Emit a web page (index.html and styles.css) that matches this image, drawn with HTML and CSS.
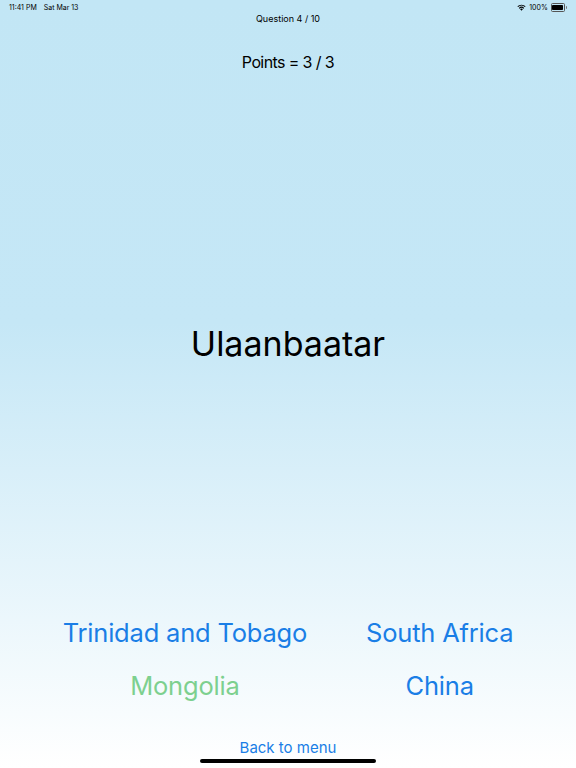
FILE: index.html
```html
<!DOCTYPE html>
<html lang="en">
<head>
<meta charset="utf-8">
<title>Quiz</title>
<link rel="stylesheet" href="styles.css">
</head>
<body>
<div class="screen">
  <div class="status">
    <div class="status-left"><span>11:41 PM</span><span>Sat Mar 13</span></div>
    <div class="status-right">
      <svg class="wifi" width="9" height="7" viewBox="0 0 18 13"><path d="M9 13 L6 9.6 A4.6 4.6 0 0 1 12 9.6 Z" fill="#000"/><path d="M3.6 7.3 A7.8 7.8 0 0 1 14.4 7.3 L13 8.8 A5.8 5.8 0 0 0 5 8.8 Z" fill="#000"/><path d="M0.8 4.2 A12 12 0 0 1 17.2 4.2 L15.8 5.7 A10 10 0 0 0 2.2 5.7 Z" fill="#000"/></svg>
      <span>100%</span>
      <span class="battery"><span class="battery-fill"></span></span><span class="battery-tip"></span>
    </div>
  </div>
  <div class="question">Question 4 / 10</div>
  <div class="points">Points = 3 / 3</div>
  <div class="capital">Ulaanbaatar</div>
  <div class="answers">
    <div class="col">
      <div class="answer">Trinidad and Tobago</div>
      <div class="answer correct">Mongolia</div>
    </div>
    <div class="col">
      <div class="answer">South Africa</div>
      <div class="answer">China</div>
    </div>
  </div>
  <div class="back">Back to menu</div>
  <div class="home"></div>
</div>
</body>
</html>
```
FILE: styles.css
```css
html, body {
  margin: 0;
  padding: 0;
}
body {
  font-family: Inter, "Liberation Sans", sans-serif;
  color: #000;
}
.screen {
  width: 576px;
  height: 768px;
  background: linear-gradient(to bottom, #c2e6f5 0%, #c5e7f6 42%, #ffffff 100%);
  display: flex;
  flex-direction: column;
  align-items: center;
  overflow: hidden;
  position: relative;
}
.status {
  width: 100%;
  box-sizing: border-box;
  height: 13px;
  padding: 2px 9px 0 9px;
  display: flex;
  justify-content: space-between;
  align-items: center;
  font-size: 7px;
  font-weight: 400;
}
.status-left span + span {
  margin-left: 7px;
}
.status-right {
  display: flex;
  align-items: center;
  gap: 3px;
}
.battery {
  width: 11px;
  height: 5px;
  border: 0.8px solid #555;
  border-radius: 1.5px;
  padding: 0.6px;
  box-sizing: content-box;
  display: flex;
}
.battery-fill {
  flex: 1;
  background: #000;
  border-radius: 0.8px;
}
.battery-tip {
  width: 1px;
  height: 2.5px;
  background: #777;
  margin-left: -2px;
  border-radius: 0 1px 1px 0;
}
.question {
  font-size: 9px;
  margin-top: 0px;
  line-height: 12px;
}
.points {
  font-size: 16px;
  letter-spacing: -0.6px;
  margin-top: 27px;
  line-height: 20px;
}
.capital {
  font-size: 34px;
  line-height: 40px;
  margin-top: 252px;
}
.answers {
  display: flex;
  gap: 59px;
  margin-top: 253px;
}
.col {
  display: flex;
  flex-direction: column;
  align-items: center;
  gap: 21px;
}
.answer {
  font-size: 25.5px;
  letter-spacing: -0.2px;
  line-height: 32px;
  color: #1a7ee6;
}
.answer.correct {
  color: #7dd08f;
}
.back {
  font-size: 15px;
  line-height: 18px;
  color: #1a7ee6;
  margin-top: 37px;
}
.home {
  width: 176px;
  height: 4px;
  border-radius: 2px;
  background: #000;
  margin-top: 2px;
}
```
